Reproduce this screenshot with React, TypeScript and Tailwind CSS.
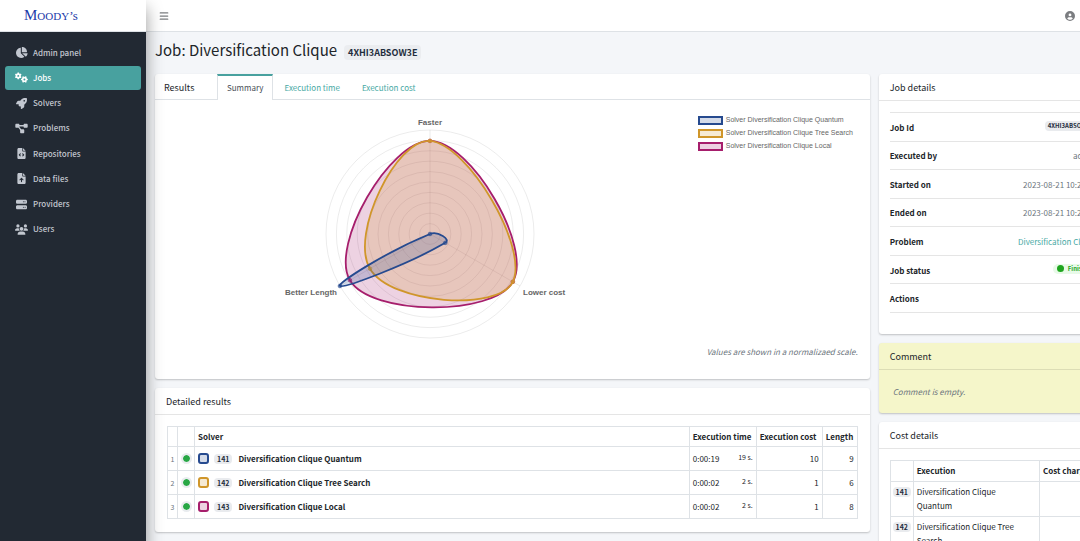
import type { ReactNode } from "react";
import type { IconType } from "react-icons";
import {
    FaBars,
    FaChartPie,
    FaCircleUser,
    FaDiagramProject,
    FaFileArrowUp,
    FaFileCode,
    FaGears,
    FaRocket,
    FaServer,
    FaUsers,
} from "react-icons/fa6";

type Point = { x: number; y: number };

const navItems: { label: string; icon: IconType; active?: boolean }[] = [
    { label: "Admin panel", icon: FaChartPie },
    { label: "Jobs", icon: FaGears, active: true },
    { label: "Solvers", icon: FaRocket },
    { label: "Problems", icon: FaDiagramProject },
    { label: "Repositories", icon: FaFileCode },
    { label: "Data files", icon: FaFileArrowUp },
    { label: "Providers", icon: FaServer },
    { label: "Users", icon: FaUsers },
];

// values: [faster, lower cost, better length], 0..1
const solvers = [
    {
        id: 141,
        name: "Diversification Clique Quantum",
        color: "#264a8f",
        swatch: "border-[#264a8f] bg-[#264a8f]/20",
        values: [0, 0.17, 1],
        time: "0:00:19",
        seconds: "19 s.",
        cost: 10,
        length: 9,
    },
    {
        id: 142,
        name: "Diversification Clique Tree Search",
        color: "#d0962a",
        swatch: "border-[#d0962a] bg-[#d0962a]/20",
        values: [0.895, 0.92, 0.667],
        time: "0:00:02",
        seconds: "2 s.",
        cost: 1,
        length: 6,
    },
    {
        id: 143,
        name: "Diversification Clique Local",
        color: "#a61e6c",
        swatch: "border-[#a61e6c] bg-[#a61e6c]/20",
        values: [0.895, 0.92, 0.889],
        time: "0:00:02",
        seconds: "2 s.",
        cost: 1,
        length: 8,
    },
];

const center: Point = { x: 150, y: 124 };
const radius = 104;
const tension = 0.5;

function toPoint(value: number, index: number): Point {
    const angle = -Math.PI / 2 + (index * 2 * Math.PI) / 3;
    return {
        x: center.x + Math.cos(angle) * value * radius,
        y: center.y + Math.sin(angle) * value * radius,
    };
}

// closed spline through the points
function splinePath(points: Point[]) {
    const n = points.length;
    const controls = points.map((p, i) => {
        const prev = points[(i + n - 1) % n];
        const next = points[(i + 1) % n];
        const d01 = Math.hypot(p.x - prev.x, p.y - prev.y);
        const d12 = Math.hypot(next.x - p.x, next.y - p.y);
        const fa = (tension * d01) / (d01 + d12);
        const fb = (tension * d12) / (d01 + d12);
        const dx = next.x - prev.x;
        const dy = next.y - prev.y;
        return {
            before: { x: p.x - fa * dx, y: p.y - fa * dy },
            after: { x: p.x + fb * dx, y: p.y + fb * dy },
        };
    });
    let d = `M${points[0].x} ${points[0].y}`;
    for (let i = 0; i < n; i++) {
        const j = (i + 1) % n;
        const a = controls[i].after;
        const b = controls[j].before;
        d += `C${a.x} ${a.y} ${b.x} ${b.y} ${points[j].x} ${points[j].y}`;
    }
    return d + "Z";
}

function RadarChart() {
    return (
        <svg
            viewBox="0 0 300 238"
            className="w-[300px] h-[238px] overflow-visible"
            role="img"
            aria-label="Solver comparison"
        >
            {Array.from({ length: 10 }, (_, i) => (
                <circle
                    key={i}
                    cx={center.x}
                    cy={center.y}
                    r={((i + 1) * radius) / 10}
                    fill="none"
                    stroke="#000"
                    strokeOpacity="0.08"
                />
            ))}
            {[0, 1, 2].map((i) => {
                const end = toPoint(1, i);
                return (
                    <line
                        key={i}
                        x1={center.x}
                        y1={center.y}
                        x2={end.x}
                        y2={end.y}
                        stroke="#000"
                        strokeOpacity="0.08"
                    />
                );
            })}
            {[...solvers].reverse().map((solver) => {
                const points = solver.values.map(toPoint);
                return (
                    <g key={solver.id} fill={solver.color} stroke={solver.color}>
                        <path
                            d={splinePath(points)}
                            fillOpacity="0.2"
                            strokeWidth="1.8"
                            strokeLinejoin="round"
                        />
                        {points.map((p, i) => (
                            <circle key={i} cx={p.x} cy={p.y} r="1.8" fillOpacity="0.4" strokeOpacity="0.7" />
                        ))}
                    </g>
                );
            })}
            <g className="font-['Liberation_Sans'] font-bold text-[8px]" fill="#666">
                <text x="150" y="15" textAnchor="middle">
                    Faster
                </text>
                <text x="243" y="185">
                    Lower cost
                </text>
                <text x="57" y="185" textAnchor="end">
                    Better Length
                </text>
            </g>
        </svg>
    );
}

const badgeSizes = {
    sm: "rounded-sm bg-[#e9ebee] px-[3px] text-[6px] leading-[10px]",
    md: "rounded-sm bg-[#e9ebee] px-[3px] text-[7px] leading-[10px]",
    lg: "rounded bg-[#ebedf0] px-1 text-[9px] leading-[15px]",
};

function Badge({ children, size = "md" }: { children: ReactNode; size?: keyof typeof badgeSizes }) {
    return <span className={`inline-block font-bold text-[#1f2d3d] ${badgeSizes[size]}`}>{children}</span>;
}

function Card({ title, children, className = "bg-white" }: { title: string; children: ReactNode; className?: string }) {
    return (
        <section className={`rounded-[3px] shadow-[0_1px_2px_rgba(0,0,0,0.22)] ${className}`}>
            <h2 className="h-[27px] border-b border-black/10 px-[11px] text-[9px] leading-[27px]">{title}</h2>
            {children}
        </section>
    );
}

function Sidebar() {
    return (
        <aside className="z-10 w-[146px] shrink-0 bg-[#222933] shadow-[0_8px_16px_rgba(0,0,0,0.4)]">
            <a
                href="#"
                className="flex h-8 items-center border-b border-[#dee2e6] bg-white pl-6 font-['Liberation_Serif',serif] text-[#1c3aa9]"
            >
                <span className="flex items-baseline leading-4">
                    <span className="text-[15px]">M</span>
                    <span className="text-[11px]">OODY</span>
                    <span className="text-[13px]">’s</span>
                </span>
            </a>
            <nav className="mt-[9px] grid h-[200px] gap-0.5 px-[5px]">
                {navItems.map(({ label, icon: Icon, active }) => (
                    <a
                        key={label}
                        href="#"
                        className={`flex items-center gap-[5px] rounded-[3px] pl-[10px] text-[8px] leading-5 font-medium ${
                            active ? "bg-[#48a19f] text-white" : "text-[#c2c7d0]"
                        }`}
                    >
                        <Icon className={active ? "w-[13px] text-[13px]" : "w-[13px] text-[11px]"} />
                        {label}
                    </a>
                ))}
            </nav>
        </aside>
    );
}

function ResultsCard() {
    return (
        <section className="rounded-[3px] bg-white shadow-[0_1px_2px_rgba(0,0,0,0.22)]">
            <div className="flex h-[26px] border-b border-[#dee2e6]">
                <h2 className="w-[62px] pl-[9px] text-[9px] leading-7">Results</h2>
                <div className="-mb-px flex text-[8px] leading-6">
                    <button className="border-x border-t-2 border-x-[#dee2e6] border-t-[#48a19f] bg-white px-[9px] text-[#495057]">
                        Summary
                    </button>
                    <button className="px-[11px] pt-0.5 text-[#48a9a4]">Execution time</button>
                    <button className="px-[11px] pt-0.5 text-[#48a9a4]">Execution cost</button>
                </div>
            </div>
            <div className="flex justify-between pt-[10px]">
                <div className="flex-1 pl-[125px]">
                    <RadarChart />
                </div>
                <ul className="flex w-[172px] flex-col gap-[3px] pt-[5px] font-['Liberation_Sans',sans-serif] text-[7px] leading-[10px] text-[#666]">
                    {solvers.map((solver) => (
                        <li key={solver.id} className="flex items-center gap-[3px]">
                            <span className={`h-[9px] w-[25px] border-2 ${solver.swatch}`} />
                            Solver {solver.name}
                        </li>
                    ))}
                </ul>
            </div>
            <p className="pr-3 pb-[23px] text-right text-[8px] leading-[8px] text-[#6c757d] italic">
                Values are shown in a normalizaed scale.
            </p>
        </section>
    );
}

function DetailedResults() {
    return (
        <Card title="Detailed results">
            <div className="px-3 pt-[11px] pb-[13px]">
                <table className="w-full border-collapse text-[8px] leading-3 [&_td]:border [&_td]:border-[#dee2e6] [&_th]:border [&_th]:border-[#dee2e6]">
                    <thead>
                        <tr className="h-5">
                            <th className="w-[10px]" />
                            <th className="w-[17px]" />
                            <th className="px-[3px] text-left">Solver</th>
                            <th className="w-[67px] px-[3px] text-left whitespace-nowrap">Execution time</th>
                            <th className="w-[66px] px-[3px] text-left whitespace-nowrap">Execution cost</th>
                            <th className="w-[35px] px-[3px] text-left">Length</th>
                        </tr>
                    </thead>
                    <tbody>
                        {solvers.map((solver, i) => (
                            <tr key={solver.id} className="h-6">
                                <td className="text-center text-[7px] text-[#6c757d]">{i + 1}</td>
                                <td>
                                    <span className="mx-auto block size-[11px] rounded-full border-2 border-[#e9ecef] bg-[#28a745] bg-clip-padding" />
                                </td>
                                <td className="px-[3px]">
                                    <div className="flex items-center">
                                        <span className={`size-[11px] rounded-[3px] border-2 ${solver.swatch}`} />
                                        <span className="mr-[6px] ml-[5px] flex">
                                            <Badge>{solver.id}</Badge>
                                        </span>
                                        <b>{solver.name}</b>
                                    </div>
                                </td>
                                <td className="px-[3px]">
                                    <div className="flex justify-between">
                                        {solver.time}
                                        <span className="text-[7px] leading-2">{solver.seconds}</span>
                                    </div>
                                </td>
                                <td className="px-[3px] text-right">{solver.cost}</td>
                                <td className="px-[3px] text-right">{solver.length}</td>
                            </tr>
                        ))}
                    </tbody>
                </table>
            </div>
        </Card>
    );
}

const jobDetails: { label: string; value: ReactNode }[] = [
    {
        label: "Job Id",
        value: (
            <span className="flex pb-1">
                <Badge size="sm">4XHI3ABSOW3E</Badge>
            </span>
        ),
    },
    { label: "Executed by", value: "admin" },
    { label: "Started on", value: "2023-08-21 10:22:36" },
    { label: "Ended on", value: "2023-08-21 10:22:58" },
    {
        label: "Problem",
        value: (
            <a href="#" className="text-[#48a9a4]">
                Diversification Clique
            </a>
        ),
    },
    {
        label: "Job status",
        value: (
            <span className="flex pb-1">
                <span className="flex h-[10px] items-center gap-1 rounded-full bg-[#e8fae8] px-1 text-[6px] font-bold text-[#1fa51f]">
                    <span className="size-[7px] rounded-full bg-[#1fa51f]" />
                    Finished
                </span>
            </span>
        ),
    },
    { label: "Actions", value: null },
];

function JobDetails() {
    return (
        <Card title="Job details">
            <div className="px-[11px] pt-[11px] pb-[21px]">
                <dl className="grid h-[201px] border-t border-black/10 text-[8px] leading-3">
                    {jobDetails.map(({ label, value }) => (
                        <div key={label} className="flex items-center justify-between border-b border-black/10 pt-0.5">
                            <dt className="font-bold">{label}</dt>
                            <dd className="flex h-3 items-center pr-1 whitespace-nowrap text-[#6c757d]">{value}</dd>
                        </div>
                    ))}
                </dl>
            </div>
        </Card>
    );
}

function CostDetails() {
    return (
        <Card title="Cost details">
            <div className="px-[11px] pt-[11px] pb-3">
                <table className="w-full table-fixed border-collapse text-[8px] leading-[14px] [&_td]:border [&_td]:border-[#dee2e6] [&_th]:border [&_th]:border-[#dee2e6]">
                    <thead>
                        <tr className="h-[21px] text-left">
                            <th className="w-[23px]" />
                            <th className="px-[3px]">Execution</th>
                            <th className="w-[61px] px-[3px] whitespace-nowrap">Cost charge</th>
                        </tr>
                    </thead>
                    <tbody>
                        {solvers.map((solver) => (
                            <tr key={solver.id}>
                                <td className="pt-[3px] text-center align-top">
                                    <Badge>{solver.id}</Badge>
                                </td>
                                <td className="py-[3px] pr-5 pl-[3px]">{solver.name}</td>
                                <td />
                            </tr>
                        ))}
                    </tbody>
                </table>
            </div>
        </Card>
    );
}

export default function App() {
    return (
        <div className="flex min-h-screen overflow-x-hidden bg-[#f4f6f9] font-['Noto_Sans_CJK_JP',sans-serif] text-[#212529]">
            <Sidebar />
            <div className="min-w-0 flex-1">
                <header className="flex h-8 items-center justify-between border-b border-[#dee2e6] bg-white pr-[5px] pl-[13px] text-[#7b7d80]">
                    <button aria-label="Toggle menu">
                        <FaBars className="text-[10px]" />
                    </button>
                    <button aria-label="Account">
                        <FaCircleUser className="text-[10px]" />
                    </button>
                </header>
                <main className="-mr-9 pl-[5px]">
                    <div className="flex h-[42px] items-baseline gap-[7px] px-1 pt-2">
                        <h1 className="text-[15px] leading-5">Job: Diversification Clique</h1>
                        <Badge size="lg">4XHI3ABSOW3E</Badge>
                    </div>
                    <div className="flex items-start">
                        <div className="flex w-3/4 flex-col gap-[9px] pr-[5px] pl-1">
                            <ResultsCard />
                            <DetailedResults />
                        </div>
                        <div className="flex w-1/4 flex-col gap-[9px] px-1">
                            <JobDetails />
                            <Card title="Comment" className="bg-[#f5f6ca]">
                                <p className="px-[14px] pt-4 pb-[15px] text-[8px] leading-3 text-[#6c757d] italic">
                                    Comment is empty.
                                </p>
                            </Card>
                            <CostDetails />
                        </div>
                    </div>
                </main>
            </div>
        </div>
    );
}
